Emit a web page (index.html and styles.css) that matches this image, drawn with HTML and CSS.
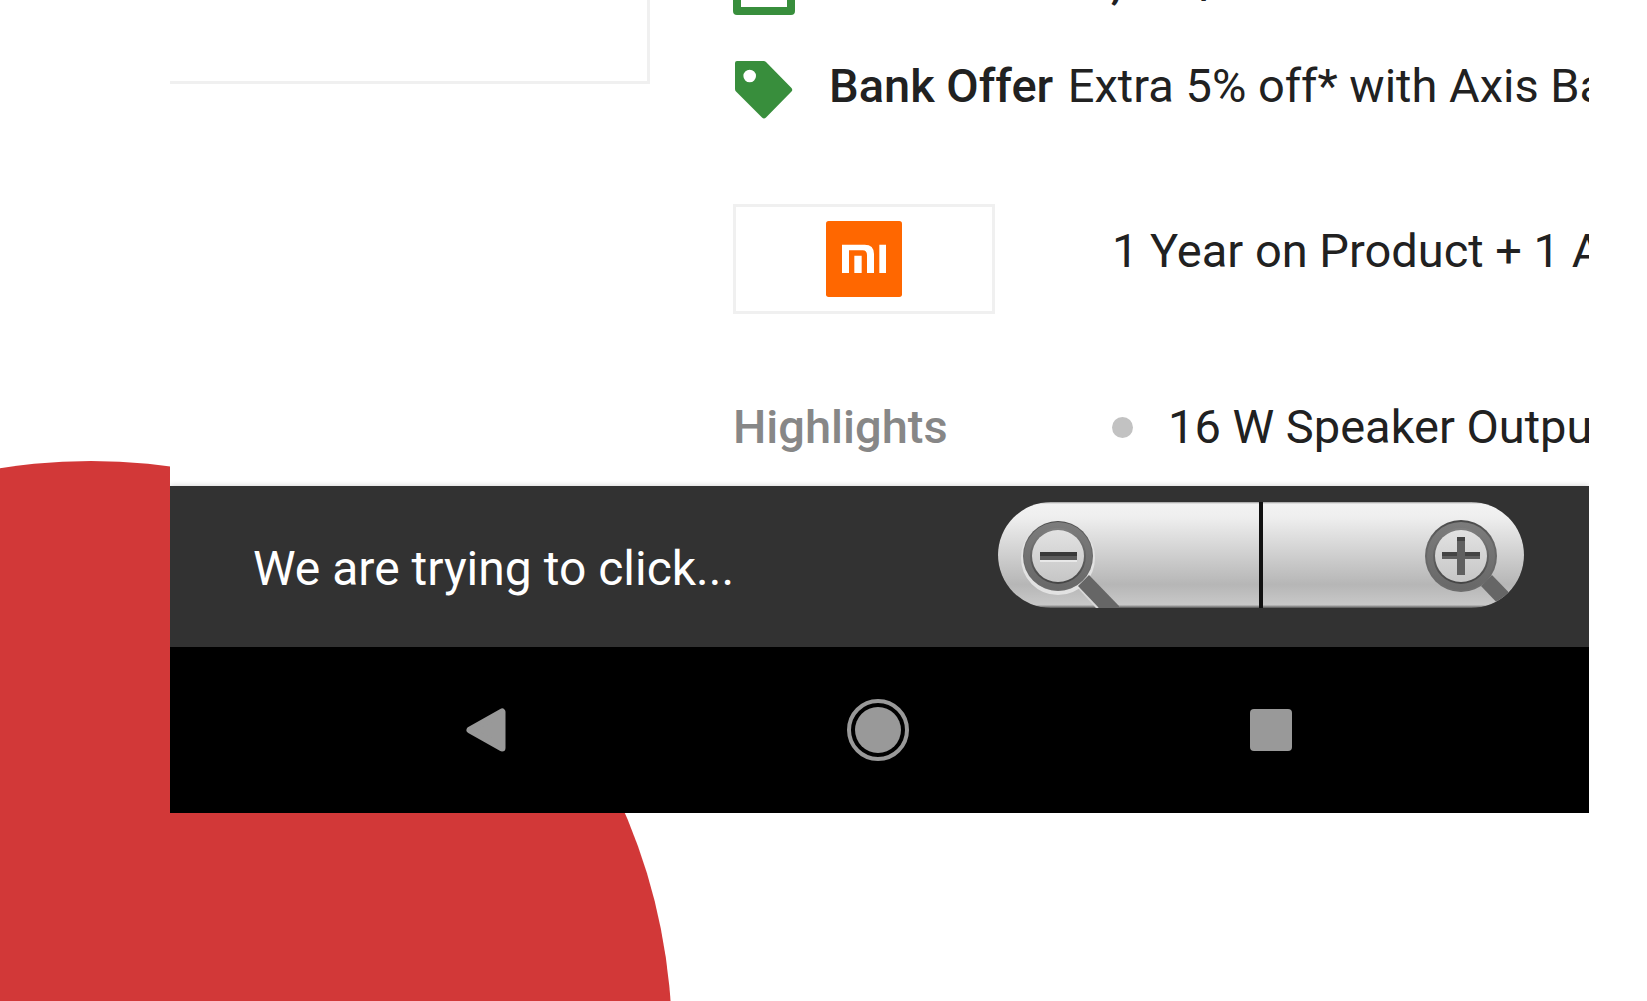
FILE: index.html
```html
<!DOCTYPE html>
<html lang="en">
<head>
    <meta charset="UTF-8">
    <meta name="viewport" content="width=device-width, initial-scale=1.0">
    <title>Product page</title>
    <link rel="stylesheet" href="styles.css">
</head>
<body>
    <div class="backdrop">
        <div class="circle"></div>
    </div>

    <div class="phone">
        <main class="page">
            <div class="gallery"></div>
            <div class="details">
                <ul class="offers">
                    <li class="offer">
                        <svg class="offer-icon" viewBox="0 0 62 61">
                            <rect x="4" y="4" width="54" height="53" fill="none" stroke="#388e3c" stroke-width="8" stroke-linejoin="round"/>
                        </svg>
                        <span><b>Credit EMI ₹1,334/month</b></span>
                    </li>
                    <li class="offer">
                        <svg class="offer-icon" viewBox="0 0 62 61">
                            <path fill="#388e3c" fill-rule="evenodd" d="M4 3H30.500Q32 3 33 4L58.500 30Q60 32 58.500 33.500L33 59.500Q31 61.500 29 59.500L3 33.500Q2 32.500 2 31V5Q2 3 4 3ZM16.700 11.700a6.300 6.300 0 1 0 0 12.600a6.300 6.300 0 1 0 0-12.600Z"/>
                        </svg>
                        <span><b>Bank Offer</b> Extra 5% off* with Axis Bank</span>
                    </li>
                </ul>

                <div class="row">
                    <div class="brand">
                        <svg class="brand-logo" viewBox="0 0 228 228" role="img" aria-label="Mi">
                            <rect width="228" height="228" rx="8" fill="#ff6700"/>
                            <path fill="#fff" d="M48 71H116Q144 71 144 99V156H123V102Q123 88 110 88H69V156H48ZM85 104H107V156H85ZM160 71H180V156H160Z"/>
                        </svg>
                    </div>
                    <div class="warranty">1 Year on Product + 1 Accessories</div>
                </div>

                <div class="row">
                    <div class="label">Highlights</div>
                    <ul class="highlights">
                        <li>16 W Speaker Output</li>
                    </ul>
                </div>
            </div>
        </main>

        <div class="snackbar">
            <p class="message">We are trying to click...</p>
            <div class="zoom">
                <button class="zoom-btn zoom-out" type="button" aria-label="Zoom out">
                    <svg viewBox="0 0 96 106">
                        <defs>
                            <linearGradient id="rim" x1="0" y1="0" x2="0" y2="1">
                                <stop offset="0" stop-color="#484848"/>
                                <stop offset="0.3" stop-color="#666"/>
                                <stop offset="1" stop-color="#6c6c6c"/>
                            </linearGradient>
                            <linearGradient id="ring" x1="0" y1="0" x2="0" y2="1">
                                <stop offset="0" stop-color="#7c7c7c"/>
                                <stop offset="1" stop-color="#686868"/>
                            </linearGradient>
                            <linearGradient id="lip" x1="0" y1="0" x2="0" y2="1">
                                <stop offset="0" stop-color="#808080"/>
                                <stop offset="1" stop-color="#444"/>
                            </linearGradient>
                            <linearGradient id="glass" x1="0" y1="0" x2="0" y2="1">
                                <stop offset="0" stop-color="#e2e2e2"/>
                                <stop offset="1" stop-color="#c6c6c6"/>
                            </linearGradient>
                        </defs>
                        <path d="M55 84L75 106" stroke="#d8d8d8" stroke-width="3"/>
                        <circle cx="35" cy="56" r="35" fill="none" stroke="#e2e2e2" stroke-width="4"/>
                        <path d="M55 84L66 73L96 104V106H76Z" fill="#666"/>
                        <circle cx="35" cy="54" r="35" fill="url(#rim)"/>
                        <circle cx="35" cy="54" r="34" fill="url(#ring)"/>
                        <circle cx="35" cy="54" r="28" fill="url(#lip)"/>
                        <circle cx="35" cy="54" r="26" fill="url(#glass)"/>
                        <path d="M17 50H54V58H17Z" fill="#5c5c5c"/>
                        <path d="M17 50H54V54H17Z" fill="#3a3a3a"/>
                        <path d="M17 59H54" stroke="#e8e8e8" stroke-width="2"/>
                    </svg>
                </button>
                <button class="zoom-btn zoom-in" type="button" aria-label="Zoom in">
                    <svg viewBox="0 0 96 106">
                        <path d="M55 84L66 73L96 104V106H76Z" fill="#666"/>
                        <circle cx="35" cy="54" r="36" fill="url(#rim)"/>
                        <circle cx="35" cy="54" r="34" fill="url(#ring)"/>
                        <circle cx="35" cy="54" r="28" fill="url(#lip)"/>
                        <circle cx="35" cy="54" r="26" fill="url(#glass)"/>
                        <path d="M31 35H39V50H54V57H39V73H31V57H16V50H31Z" fill="#606060"/>
                        <path d="M31 35H39V39H31ZM16 50H31V54H16ZM39 50H54V54H39Z" fill="#444"/>
                    </svg>
                </button>
            </div>
        </div>

        <nav class="navbar">
            <button class="nav-btn" type="button" aria-label="Back">
                <svg viewBox="0 0 64 64"><path d="M48 14V50L16 32Z" fill="#999" stroke="#999" stroke-width="7" stroke-linejoin="round"/></svg>
            </button>
            <button class="nav-btn" type="button" aria-label="Home">
                <svg viewBox="0 0 64 64"><circle cx="32" cy="32" r="29" fill="none" stroke="#999" stroke-width="4"/><circle cx="32" cy="32" r="23" fill="#999"/></svg>
            </button>
            <button class="nav-btn" type="button" aria-label="Recent apps">
                <svg viewBox="0 0 64 64"><rect x="11" y="11" width="42" height="42" rx="4" fill="#999"/></svg>
            </button>
        </nav>
    </div>
</body>
</html>
```
FILE: styles.css
```css
* {
    box-sizing: border-box;
}
body {
    margin: 0;
    min-height: 100vh;
    position: relative;
    background: #fff;
    color: #212121;
    font-family: Roboto, sans-serif;
    font-size: 47px;
    line-height: 56px;
}
ul {
    list-style: none;
    margin: 0;
    padding: 0;
}
b {
    margin-right: 3px;
    font-weight: 500;
}
button {
    border: none;
    padding: 0;
    cursor: pointer;
}
svg {
    display: block;
    overflow: visible;
}

/* Background decoration */
.backdrop {
    position: absolute;
    inset: 0;
    overflow: hidden;
}
.circle {
    position: absolute;
    left: -490px;
    top: 461px;
    width: 1162px;
    height: 1162px;
    border-radius: 50%;
    background: #d23838;
}

/* Phone screen */
.phone {
    position: relative;
    margin: 0 58px 0 170px;
    overflow: hidden;
}
.page {
    display: flex;
    gap: 83px;
    height: 486px;
    overflow: hidden;
    background: #fff;
    white-space: nowrap;
}
.gallery {
    flex: 0 0 480px;
    height: 84px;
    border: solid #f0f0f0;
    border-width: 0 3px 3px 0;
}
.details {
    flex: 1;
    min-width: 0;
    display: flex;
    flex-direction: column;
    gap: 85px;
    margin-top: -46px;
}
.offers {
    display: flex;
    flex-direction: column;
    gap: 43px;
}
.offer {
    display: flex;
    gap: 34px;
}
.offer-icon {
    flex: none;
    width: 62px;
    height: 61px;
}
.row {
    display: grid;
    grid-template-columns: 262px 1fr;
    column-gap: 117px;
}
.brand {
    display: flex;
    align-items: center;
    justify-content: center;
    height: 110px;
    border: 3px solid #f0f0f0;
}
.brand-logo {
    width: 76px;
    height: 76px;
}
.warranty {
    padding-top: 19px;
}
.label {
    color: #878787;
    font-weight: 500;
}
.highlights li {
    display: flex;
    align-items: center;
    gap: 35px;
}
.highlights li::before {
    content: "";
    width: 21px;
    height: 21px;
    border-radius: 50%;
    background: #c2c2c2;
}

/* Snackbar with the zoom control */
.snackbar {
    position: relative;
    display: flex;
    justify-content: space-between;
    align-items: flex-start;
    min-height: 161px;
    padding: 16px 65px 0 83px;
    background: #323232;
    box-shadow: 0 0 6px rgba(0, 0, 0, 0.2);
}
.message {
    margin: 0;
    padding-top: 39px;
    color: #fff;
    font-size: 48px;
}
.zoom {
    display: grid;
    grid-template-columns: 1fr 1fr;
    gap: 4px;
    width: 526px;
    height: 106px;
    border-radius: 53px;
    overflow: hidden;
    background: #111;
}
.zoom-btn {
    display: flex;
    background: linear-gradient(#999 0, #f3f3f3 2px, #eee 15%, #b6b6b6 78%, #c8c8c8 97%, #555 100%);
}
.zoom-btn svg {
    width: 96px;
    height: 106px;
}
.zoom-out {
    padding-left: 25px;
}
.zoom-in {
    justify-content: flex-end;
    padding-right: 2px;
}

/* Android navigation */
.navbar {
    position: relative;
    display: grid;
    grid-template-columns: repeat(3, 1fr);
    padding: 51px 122px 51px 120px;
    background: #000;
}
.nav-btn {
    justify-self: center;
    background: none;
}
.nav-btn svg {
    width: 64px;
    height: 64px;
}
```
